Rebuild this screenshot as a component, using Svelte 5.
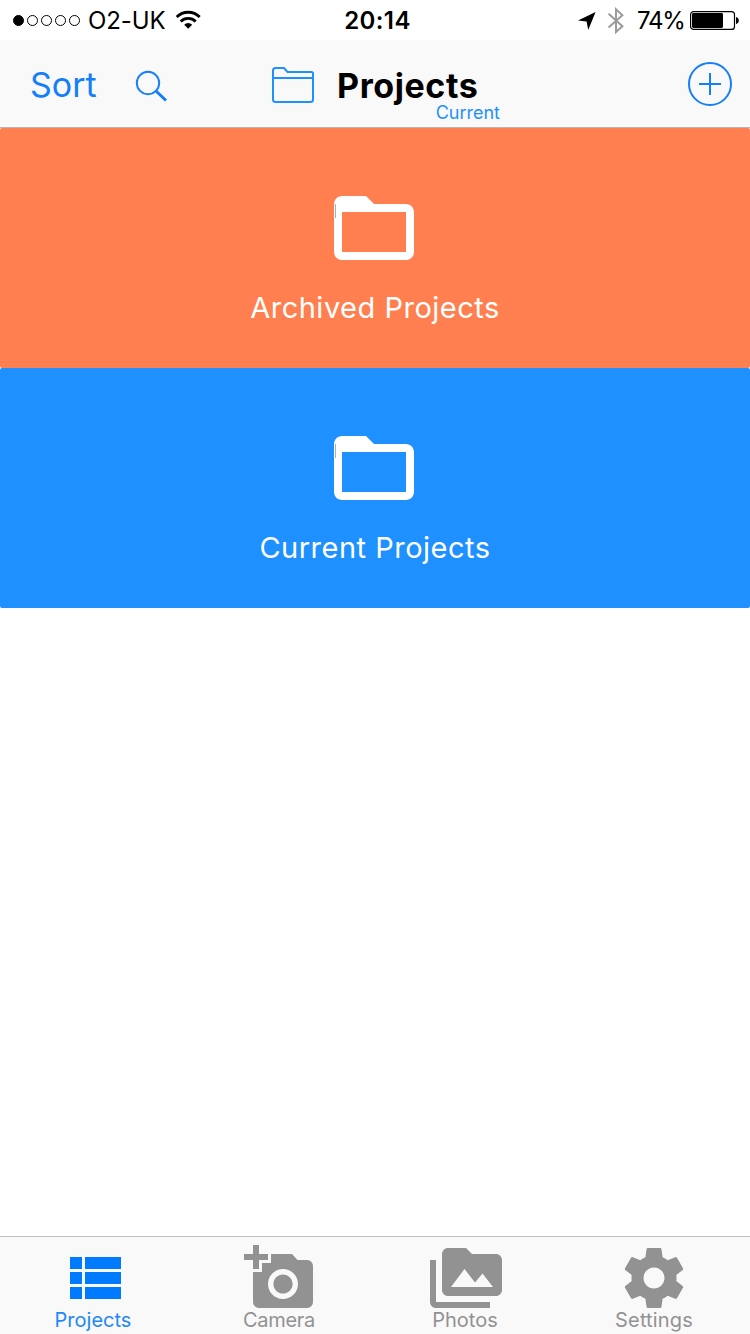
<!-- src/App.svelte -->
<script>
    const signal = [true, false, false, false, false];

    const folders = [
        { id: "archived", label: "Archived Projects" },
        { id: "current", label: "Current Projects" },
    ];

    const tabs = [
        {
            id: "projects",
            label: "Projects",
            icon: "M4 14h4v-4H4v4zm0 5h4v-4H4v4zM4 9h4V5H4v4zm5 5h12v-4H9v4zm0 5h12v-4H9v4zM9 5v4h12V5H9z",
        },
        {
            id: "camera",
            label: "Camera",
            icon: "M3 4V1h2v3h3v2H5v3H3V6H0V4h3zm3 6V7h3V4h7l1.83 2H21c1.1 0 2 .9 2 2v12c0 1.1-.9 2-2 2H5c-1.1 0-2-.9-2-2V10h3zm7 9c2.76 0 5-2.24 5-5s-2.24-5-5-5-5 2.24-5 5 2.24 5 5 5zm-3.2-5c0 1.77 1.43 3.2 3.2 3.2s3.2-1.43 3.2-3.2-1.43-3.2-3.2-3.2-3.2 1.43-3.2 3.2z",
        },
        {
            id: "photos",
            label: "Photos",
            icon: "M2 6H0v5h.01L0 20c0 1.1.9 2 2 2h18v-2H2V6zm20-2h-8l-2-2H6c-1.1 0-1.99.9-1.99 2L4 16c0 1.1.9 2 2 2h16c1.1 0 2-.9 2-2V6c0-1.1-.9-2-2-2zM7 15l4.5-6 3.5 4.51 2.5-3.01L21 15H7z",
        },
        {
            id: "settings",
            label: "Settings",
            icon: "M19.43 12.98c.04-.32.07-.64.07-.98s-.03-.66-.07-.98l2.11-1.65c.19-.15.24-.42.12-.64l-2-3.46c-.12-.22-.39-.3-.61-.22l-2.49 1c-.52-.4-1.08-.73-1.69-.98l-.38-2.65C14.46 2.18 14.25 2 14 2h-4c-.25 0-.46.18-.49.42l-.38 2.65c-.61.25-1.17.59-1.69.98l-2.49-1c-.23-.09-.49 0-.61.22l-2 3.46c-.13.22-.07.49.12.64l2.11 1.65c-.04.32-.07.65-.07.98s.03.66.07.98l-2.11 1.65c-.19.15-.24.42-.12.64l2 3.46c.12.22.39.3.61.22l2.49-1c.52.4 1.08.73 1.69.98l.38 2.65c.03.24.24.42.49.42h4c.25 0 .46-.18.49-.42l.38-2.65c.61-.25 1.17-.59 1.69-.98l2.49 1c.23.09.49 0 .61-.22l2-3.46c.12-.22.07-.49-.12-.64l-2.11-1.65zM12 15.5c-1.93 0-3.5-1.57-3.5-3.5s1.57-3.5 3.5-3.5 3.5 1.57 3.5 3.5-1.57 3.5-3.5 3.5z",
        },
    ];

    let activeTab = "projects";
</script>

<div class="screen">
    <div class="status-bar">
        <div class="status-left">
            <div class="signal">
                {#each signal as on}
                    <span class="dot" class:on></span>
                {/each}
            </div>
            <span class="carrier">O2-UK</span>
            <svg width="26" height="20" viewBox="0 0 26 20">
                <g fill="none" stroke="#000" stroke-width="2.8">
                    <path d="M1.7 7a16.3 16.3 0 0 1 23 0" />
                    <path d="M5.7 11.4a10.7 10.7 0 0 1 15 0" />
                </g>
                <path d="M9.2 14.7a5.8 5.8 0 0 1 8 0L13.2 18.800z" />
            </svg>
        </div>
        <span class="clock">20:14</span>
        <div class="status-right">
            <svg width="20" height="20" viewBox="0 0 20 20">
                <path d="M18.6 2 11.2 20 9.6 11.4 1 10.400z" />
            </svg>
            <svg class="bluetooth" width="18" height="28" viewBox="0 0 18 28">
                <path
                    d="M1.6 7.8 15.4 20.2 9 26V3.2l6.4 6L1.6 21.400"
                    fill="none"
                    stroke="#9b9b9b"
                    stroke-width="2"
                />
            </svg>
            <span class="percent">74%</span>
            <svg width="50" height="20" viewBox="0 0 50 20">
                <rect x=".6" y="1.6" width="43.9" height="17.8" rx="3" fill="none" stroke="#000" stroke-width="1.2" />
                <rect x="2" y="3" width="31" height="15" rx="1.4" />
                <path d="M46 7c1.8.4 2.8 1.8 2.8 3.5s-1 3.1-2.8 3.5z" />
            </svg>
        </div>
    </div>

    <header class="navbar">
        <div class="nav-left">
            <button class="sort">Sort</button>
            <button class="search" aria-label="Search">
                <svg width="34" height="34" viewBox="0 0 34 34" fill="none" stroke="#147efb">
                    <circle cx="13" cy="13" r="11.2" stroke-width="1.9" />
                    <path d="M21 21l10 9.5" stroke-width="3" />
                </svg>
            </button>
        </div>
        <div class="nav-title">
            <svg width="44" height="38" viewBox="0 0 44 38" fill="none" stroke="#1e90ff" stroke-width="2">
                <path d="M2 12V4.5Q2 2 4.5 2H13l3.5 4H40.5Q42 6 42 7.5V33.5Q42 36 39.5 36H4.5Q2 36 2 33.5V12H42" />
            </svg>
            <div class="titles">
                <h1>Projects</h1>
                <span class="subtitle">Current</span>
            </div>
        </div>
        <button class="add" aria-label="Add project">
            <svg width="44" height="44" viewBox="0 0 44 44" fill="none" stroke="#147efb" stroke-width="2">
                <circle cx="22" cy="22" r="21" />
                <path d="M11 22h22M22 11v22" />
            </svg>
        </button>
    </header>

    <main>
        {#each folders as folder}
            <button class="folder {folder.id}">
                <svg width="96" height="96" viewBox="0 0 24 24">
                    <path
                        fill="#fff"
                        d="M20 6h-8l-2-2H4c-1.1 0-1.99.9-1.99 2L2 18c0 1.1.9 2 2 2h16c1.1 0 2-.9 2-2V8c0-1.1-.9-2-2-2zm0 12H4V8h16v10z"
                    />
                    <path d="M2.38 6v3.5" stroke="#999" stroke-width=".2" />
                </svg>
                <span class="folder-label">{folder.label}</span>
            </button>
        {/each}
    </main>

    <nav class="tab-bar">
        {#each tabs as tab}
            <button
                class="tab {tab.id}"
                class:active={activeTab === tab.id}
                on:click={() => (activeTab = tab.id)}
            >
                <svg width="72" height="72" viewBox="0 0 24 24">
                    <path d={tab.icon} />
                </svg>
                <span class="tab-label">{tab.label}</span>
            </button>
        {/each}
    </nav>
</div>

<style>
    :global(body) {
        margin: 0;
        background: #fff;
    }

    .screen {
        width: 750px;
        height: 1334px;
        display: flex;
        flex-direction: column;
        overflow: hidden;
        background: #fff;
        font-family: Inter, "Liberation Sans", sans-serif;
    }

    svg {
        display: block;
        flex: none;
    }

    button {
        padding: 0;
        border: none;
        background: none;
        font-family: inherit;
        cursor: pointer;
    }

    .status-bar {
        height: 40px;
        display: grid;
        grid-template-columns: 1fr auto 1fr;
        align-items: center;
        font-size: 24px;
        line-height: 38px;
        white-space: nowrap;
    }

    .status-left {
        display: flex;
        align-items: center;
        padding-left: 13px;
    }

    .signal {
        display: flex;
        gap: 3px;
    }

    .dot {
        box-sizing: border-box;
        width: 11px;
        height: 11px;
        border: 1px solid #000;
        border-radius: 50%;
    }

    .dot.on {
        background: #000;
    }

    .carrier,
    .clock,
    .percent {
        padding-top: 2px;
    }

    .carrier {
        margin-left: 8px;
        width: 87px;
        letter-spacing: -0.1px;
    }

    .clock {
        font-weight: 600;
        letter-spacing: 0.4px;
        margin-left: 5px;
    }

    .status-right {
        display: flex;
        align-items: center;
        justify-content: flex-end;
        padding-right: 10px;
    }

    .bluetooth {
        margin-left: 10px;
    }

    .percent {
        width: 47px;
        margin: 0 6px 0 12px;
        letter-spacing: -1.2px;
    }

    .navbar {
        box-sizing: border-box;
        height: 88px;
        display: flex;
        align-items: flex-start;
        background: #f9f9f9;
        border-bottom: 1px solid #b8b8b8;
    }

    .nav-left {
        width: 271px;
        display: flex;
        align-items: flex-start;
    }

    .sort {
        margin: 24px 0 0 30px;
        width: 105px;
        text-align: left;
        font-size: 34px;
        line-height: 41px;
        color: #147efb;
    }

    .search {
        margin-top: 30px;
    }

    .nav-title {
        flex: 1;
        display: flex;
    }

    .nav-title > svg {
        margin-top: 26px;
    }

    .titles {
        width: 163px;
        padding-top: 29px;
        margin-left: 22px;
        display: flex;
        flex-direction: column;
    }

    h1 {
        margin: 0;
        font-size: 34px;
        font-weight: 700;
        line-height: 34px;
        letter-spacing: 0.6px;
    }

    .subtitle {
        align-self: flex-end;
        font-size: 18px;
        line-height: 20px;
        color: #1e90ff;
    }

    .add {
        margin: 22px 18px 0 0;
    }

    main {
        flex: 1;
        display: flex;
        flex-direction: column;
    }

    .folder {
        height: 240px;
        padding-top: 52px;
        display: flex;
        flex-direction: column;
        align-items: center;
        border-radius: 2px;
        box-sizing: border-box;
        color: #fff;
    }

    .folder svg {
        margin-left: -2px;
    }

    .archived {
        background: #ff7f50;
    }

    .current {
        background: #1e90ff;
    }

    .folder-label {
        margin-top: 14px;
        font-size: 29px;
        line-height: 36px;
        letter-spacing: 0.5px;
    }

    .tab-bar {
        box-sizing: border-box;
        height: 98px;
        display: grid;
        grid-template-columns: 188px 184px 188px 188px;
        background: #f9f9f9;
        border-top: 1px solid #bfbfbf;
    }

    .tab {
        padding-top: 5px;
        display: flex;
        flex-direction: column;
        align-items: center;
        color: #929292;
        fill: #929292;
    }

    .tab.active {
        color: #1e88f7;
        fill: #007aff;
    }

    .tab-label {
        margin: -4px 2px 0 0;
        font-size: 20px;
        line-height: 20px;
    }

    .settings .tab-label {
        letter-spacing: 0.15px;
    }

    .camera .tab-label {
        letter-spacing: -0.3px;
    }

    .settings .tab-label {
        margin-right: 0;
    }
</style>
